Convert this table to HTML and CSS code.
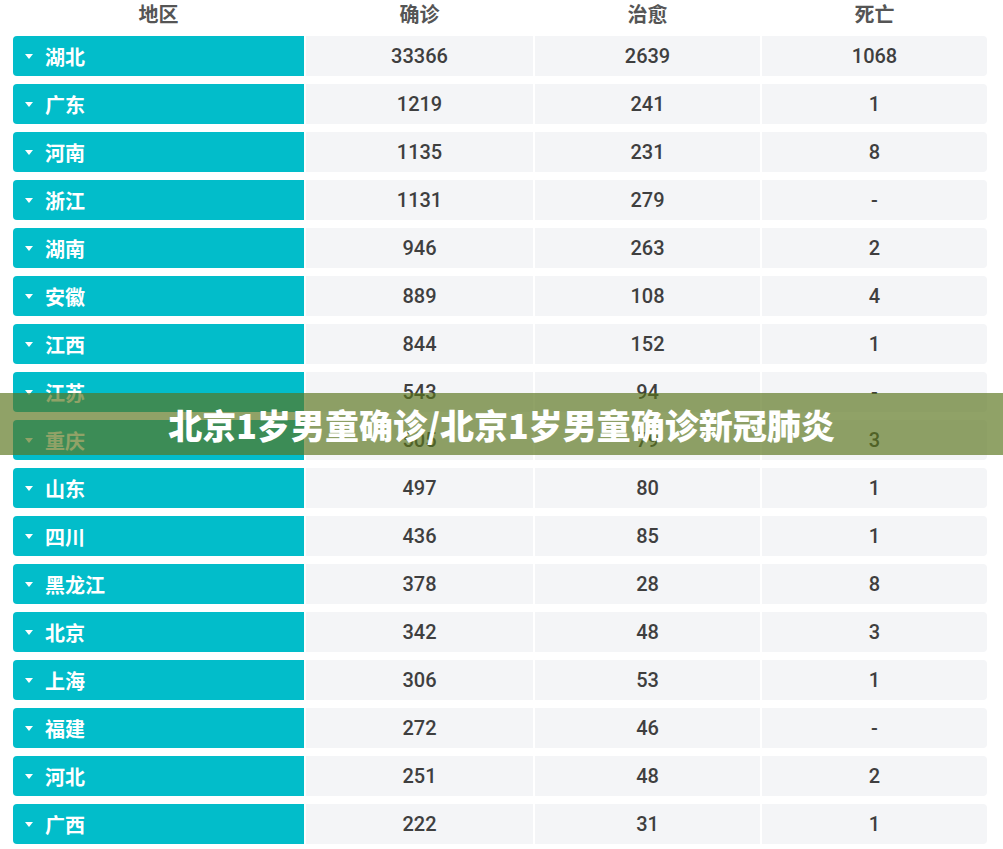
FILE: index.html
```html
<!DOCTYPE html>
<html lang="zh">
<head>
<meta charset="utf-8">
<title>疫情数据</title>
<link rel="stylesheet" href="styles.css">
</head>
<body>
<div class="page">
  <div class="table">
    <div class="head">地区</div><div class="head">确诊</div><div class="head">治愈</div><div class="head">死亡</div>

    <div class="region"><span class="caret"></span>湖北</div><div class="num">33366</div><div class="num">2639</div><div class="num last">1068</div>
    <div class="region"><span class="caret"></span>广东</div><div class="num">1219</div><div class="num">241</div><div class="num last">1</div>
    <div class="region"><span class="caret"></span>河南</div><div class="num">1135</div><div class="num">231</div><div class="num last">8</div>
    <div class="region"><span class="caret"></span>浙江</div><div class="num">1131</div><div class="num">279</div><div class="num last">-</div>
    <div class="region"><span class="caret"></span>湖南</div><div class="num">946</div><div class="num">263</div><div class="num last">2</div>
    <div class="region"><span class="caret"></span>安徽</div><div class="num">889</div><div class="num">108</div><div class="num last">4</div>
    <div class="region"><span class="caret"></span>江西</div><div class="num">844</div><div class="num">152</div><div class="num last">1</div>
    <div class="region"><span class="caret"></span>江苏</div><div class="num">543</div><div class="num">94</div><div class="num last">-</div>
    <div class="region"><span class="caret"></span>重庆</div><div class="num">505</div><div class="num">79</div><div class="num last">3</div>
    <div class="region"><span class="caret"></span>山东</div><div class="num">497</div><div class="num">80</div><div class="num last">1</div>
    <div class="region"><span class="caret"></span>四川</div><div class="num">436</div><div class="num">85</div><div class="num last">1</div>
    <div class="region"><span class="caret"></span>黑龙江</div><div class="num">378</div><div class="num">28</div><div class="num last">8</div>
    <div class="region"><span class="caret"></span>北京</div><div class="num">342</div><div class="num">48</div><div class="num last">3</div>
    <div class="region"><span class="caret"></span>上海</div><div class="num">306</div><div class="num">53</div><div class="num last">1</div>
    <div class="region"><span class="caret"></span>福建</div><div class="num">272</div><div class="num">46</div><div class="num last">-</div>
    <div class="region"><span class="caret"></span>河北</div><div class="num">251</div><div class="num">48</div><div class="num last">2</div>
    <div class="region"><span class="caret"></span>广西</div><div class="num">222</div><div class="num">31</div><div class="num last">1</div>
  </div>
  <div class="banner">北京1岁男童确诊/北京1岁男童确诊新冠肺炎</div>
</div>
</body>
</html>
```
FILE: styles.css
```css
html, body {
  margin: 0;
  padding: 0;
  background: #ffffff;
}

.page {
  position: relative;
  width: 1003px;
  height: 849px;
  overflow: hidden;
}

.table {
  display: grid;
  grid-template-columns: 291px 227px 225px 225px;
  grid-template-rows: 28px;
  grid-auto-rows: 40px;
  column-gap: 2px;
  row-gap: 8px;
  padding-left: 13px;
}

.head {
  display: flex;
  align-items: center;
  justify-content: center;
  height: 26px;
  font-family: "Noto Sans CJK SC", sans-serif;
  font-weight: 700;
  font-size: 20px;
  color: #555555;
}

.region {
  display: flex;
  align-items: center;
  background: #02bdca;
  border-radius: 4px 0 0 4px;
  padding-left: 12px;
  font-family: "Noto Sans CJK SC", sans-serif;
  font-weight: 700;
  font-size: 20px;
  color: #ffffff;
}

.caret {
  width: 0;
  height: 0;
  border-left: 4.5px solid transparent;
  border-right: 4.5px solid transparent;
  border-top: 5px solid #ffffff;
  margin-right: 12px;
  margin-top: 1px;
}

.num {
  display: flex;
  align-items: center;
  justify-content: center;
  background: #f4f5f7;
  font-family: Roboto, "Liberation Sans", sans-serif;
  font-weight: 500;
  font-size: 20px;
  color: #3f3f3f;
}

.num.last {
  border-radius: 0 4px 4px 0;
}

.banner {
  position: absolute;
  left: 0;
  right: 0;
  top: 393px;
  height: 62px;
  display: flex;
  align-items: center;
  justify-content: center;
  background: rgba(89, 117, 28, 0.67);
  font-family: "Noto Sans CJK SC", sans-serif;
  font-weight: 900;
  font-size: 34px;
  color: #ffffff;
}
```
